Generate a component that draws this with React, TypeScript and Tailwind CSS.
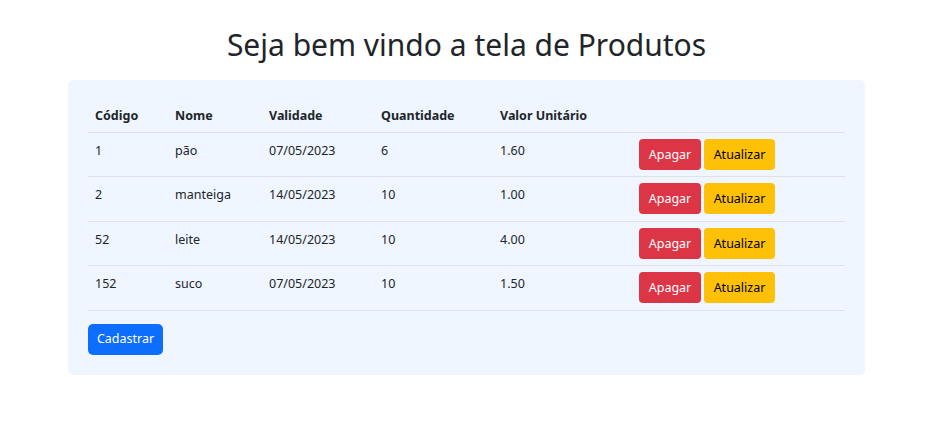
const produtos = [
  { codigo: '1', nome: 'pão', validade: '07/05/2023', quantidade: '6', valor: '1.60' },
  { codigo: '2', nome: 'manteiga', validade: '14/05/2023', quantidade: '10', valor: '1.00' },
  { codigo: '52', nome: 'leite', validade: '14/05/2023', quantidade: '10', valor: '4.00' },
  { codigo: '152', nome: 'suco', validade: '07/05/2023', quantidade: '10', valor: '1.50' },
];

const font = { fontFamily: '"Noto Sans", "Open Sans", sans-serif' };

export default function App() {
  return (
    <div className="min-h-[440px] bg-white text-[#212529]" style={font}>
      <div className="ml-[68px] w-[797px] pt-[27px]">
        <h1 className="text-center text-[30px] font-normal leading-[36px] mb-[17px]">
          Seja bem vindo a tela de Produtos
        </h1>

        <div className="bg-[#eff6ff] rounded-[5px] px-[20px] pt-[20px] pb-[20px]">
          <table className="w-full border-collapse text-[12.5px] leading-[19px]">
            <thead>
              <tr className="border-b border-[#dee2e6] h-[32px]">
                <th className="w-[80px] px-[7px] text-left font-bold">Código</th>
                <th className="w-[94px] px-[7px] text-left font-bold">Nome</th>
                <th className="w-[112px] px-[7px] text-left font-bold">Validade</th>
                <th className="w-[119px] px-[7px] text-left font-bold">Quantidade</th>
                <th className="w-[139px] px-[7px] text-left font-bold">Valor Unitário</th>
                <th className="px-[7px]"></th>
              </tr>
            </thead>
            <tbody>
              {produtos.map((p) => (
                <tr key={p.codigo} className="border-b border-[#dee2e6] h-[44.5px]">
                  <td className="px-[7px] pt-[8px] align-top">{p.codigo}</td>
                  <td className="px-[7px] pt-[8px] align-top">{p.nome}</td>
                  <td className="px-[7px] pt-[8px] align-top">{p.validade}</td>
                  <td className="px-[7px] pt-[8px] align-top">{p.quantidade}</td>
                  <td className="px-[7px] pt-[8px] align-top">{p.valor}</td>
                  <td className="px-[7px] pt-[6px] pb-[6px] align-top">
                    <div className="flex gap-[3px]">
                      <button className="h-[31px] w-[62px] rounded-[4px] bg-[#dc3545] text-white text-[12.5px]">
                        Apagar
                      </button>
                      <button className="h-[31px] w-[71px] rounded-[4px] bg-[#ffc107] text-black text-[12.5px]">
                        Atualizar
                      </button>
                    </div>
                  </td>
                </tr>
              ))}
            </tbody>
          </table>

          <button className="mt-[13px] h-[31px] w-[75px] rounded-[5px] bg-[#0d6efd] text-white text-[12.5px]">
            Cadastrar
          </button>
        </div>
      </div>
    </div>
  );
}
